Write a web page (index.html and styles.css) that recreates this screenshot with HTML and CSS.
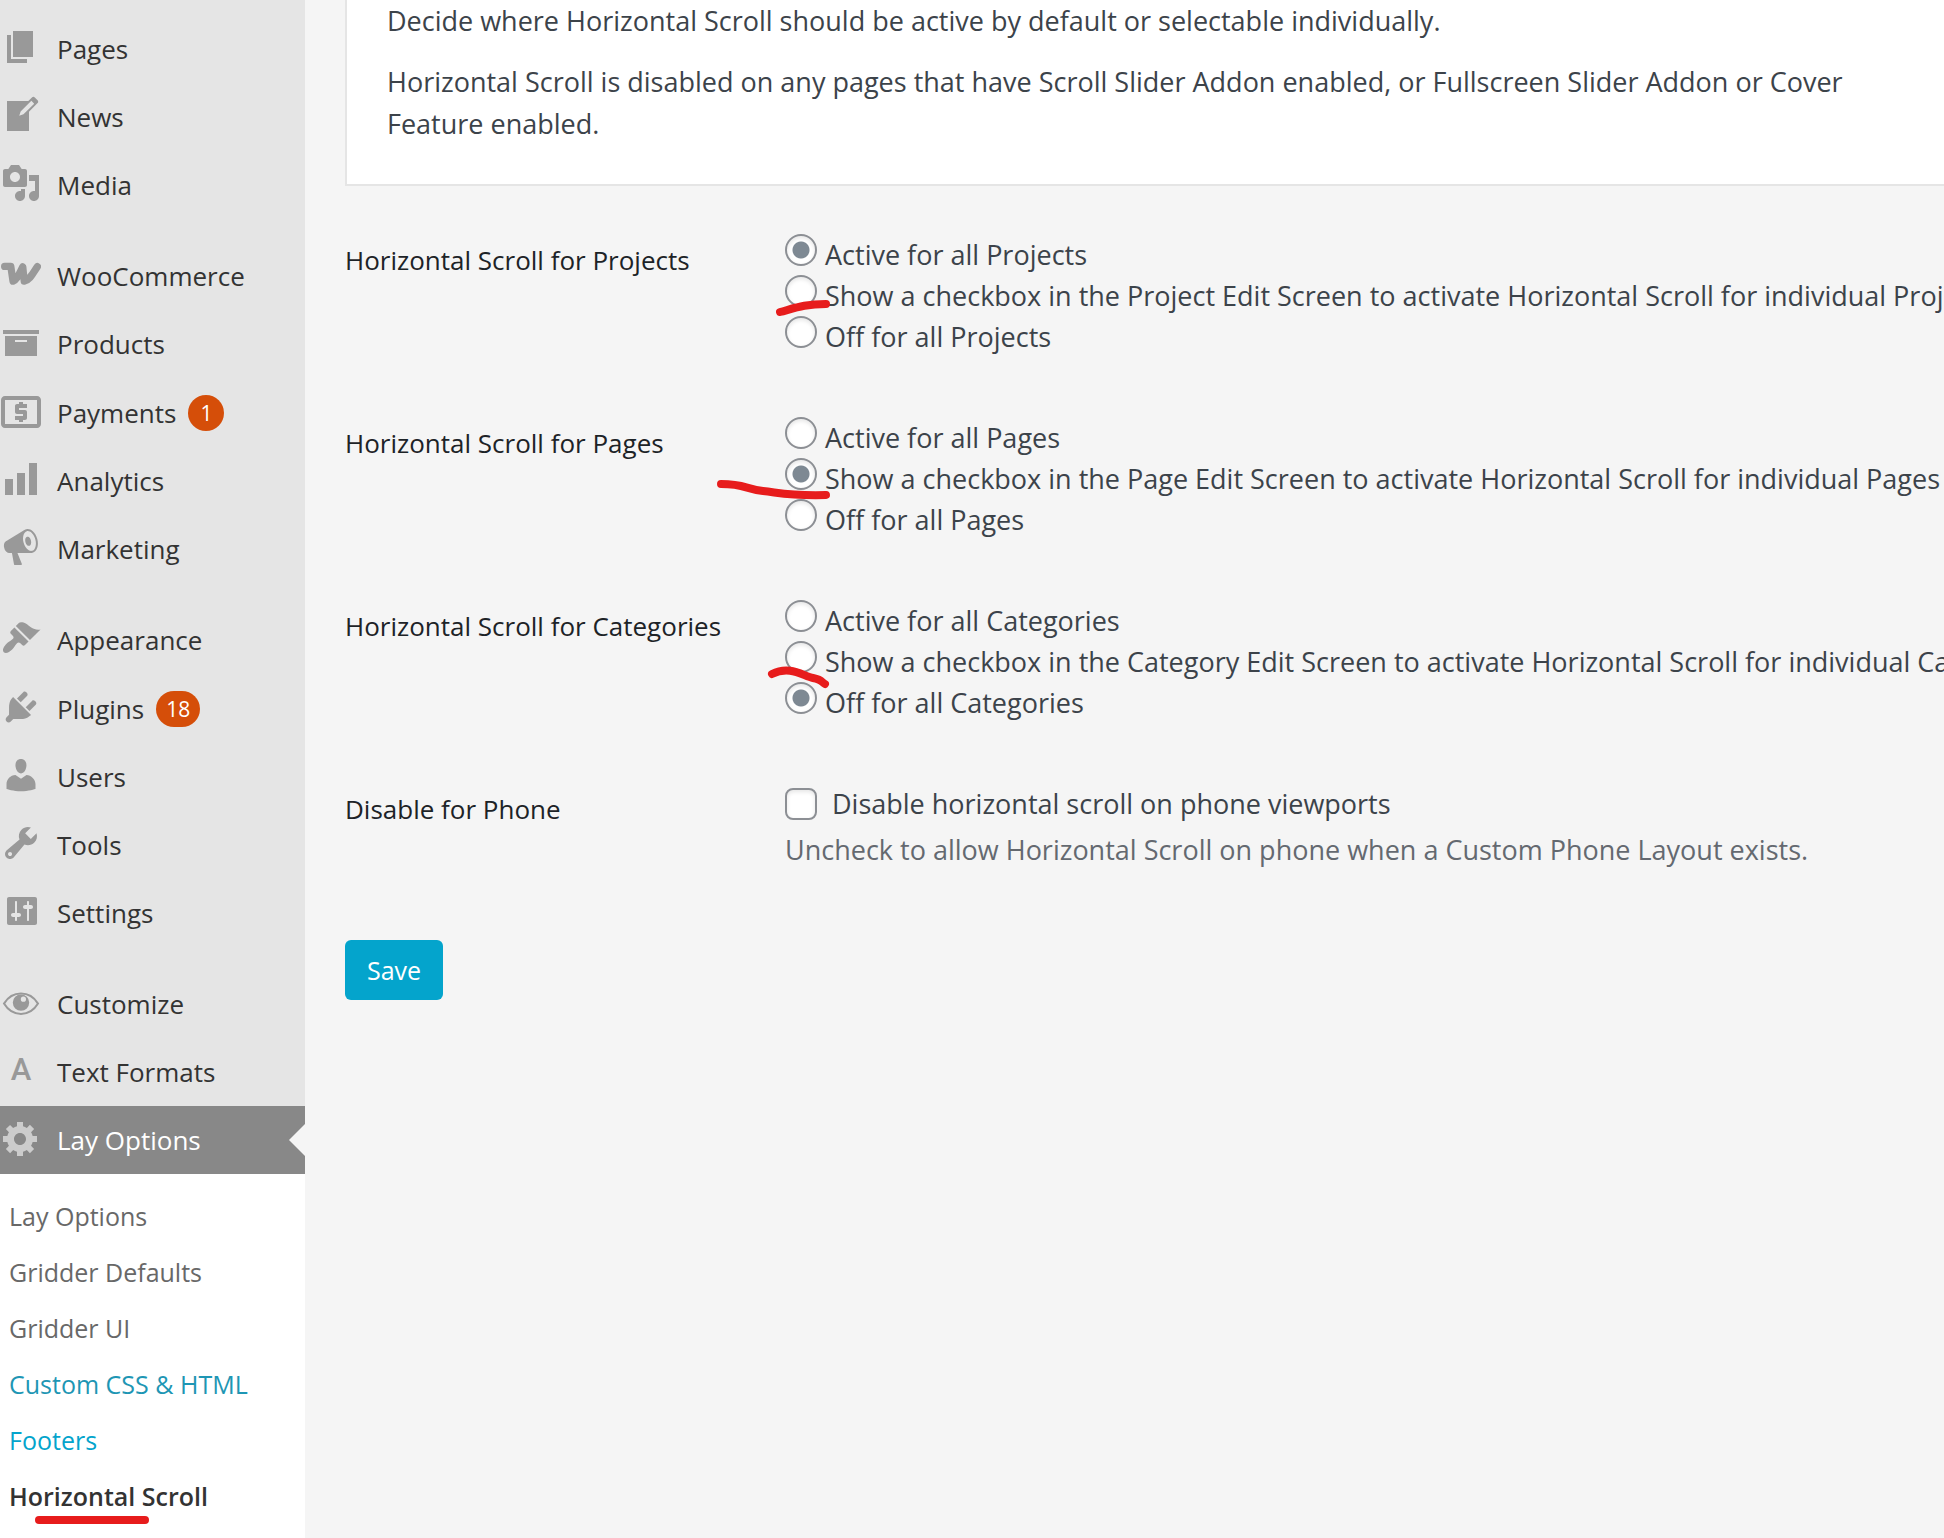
FILE: index.html
```html
<!DOCTYPE html>
<html lang="en">

<head>
    <meta charset="UTF-8">
    <meta name="viewport" content="width=device-width, initial-scale=1.0">
    <title>Horizontal Scroll</title>
    <link rel="stylesheet" href="styles.css">
</head>

<body>
    <div class="wrap">
        <nav class="sidebar">
            <ul class="menu">
                <li><a href="#"><svg class="icon" viewBox="0 0 20 20"><path d="M6 15v-13h10v13h-10zM5 16h8v2h-10v-14h2v12z"/></svg>Pages</a></li>
                <li><a href="#"><svg class="icon" viewBox="0 0 20 20"><path d="M16.89 1.2l1.41 1.41c.39.39.39 1.02 0 1.41L14 8.33V18H3V3h10.67l1.8-1.8c.4-.39 1.03-.4 1.42 0zm-5.66 8.48l5.37-5.36-1.42-1.42-5.36 5.37-.71 2.12z"/></svg>News</a></li>
                <li><a href="#"><svg class="icon" viewBox="0 0 20 20"><path d="M13 11V4c0-.55-.45-1-1-1h-1.67L9 1H5L3.67 3H2c-.55 0-1 .45-1 1v7c0 .55.45 1 1 1h10c.55 0 1-.45 1-1zM7 4.5c1.38 0 2.5 1.12 2.5 2.5S8.38 9.5 7 9.5 4.5 8.38 4.5 7 5.62 4.5 7 4.5zM14 6h5v10.5c0 1.38-1.12 2.5-2.5 2.5S14 17.88 14 16.5s1.12-2.5 2.5-2.5c.17 0 .34.02.5.05V9h-3V6zm-4 8.05V13h2v3.5c0 1.38-1.12 2.5-2.5 2.5S7 17.88 7 16.5 8.12 14 9.5 14c.17 0 .34.02.5.05z"/></svg>Media</a></li>
                <li class="group"><a href="#"><svg class="icon" viewBox="0 0 20 20"><path class="woo" d="M1.8 6.2H4.9L6 13.6C8 13 9.2 9.5 10.9 6.4L11.6 13.6C14.500 13 16 9.500 18.200 6.300"/></svg>WooCommerce</a></li>
                <li><a href="#"><svg class="icon" viewBox="0 0 20 20"><path d="M19 4v2H1V4h18zM2 7h16v10H2V7zm11 3V9H7v1h6z"/></svg>Products</a></li>
                <li class="counted"><a href="#"><svg class="icon" viewBox="2 1.5 20 20"><path d="M11 17h2v-1h1c.55 0 1-.45 1-1v-3c0-.55-.45-1-1-1h-3v-1h4V8h-2V7h-2v1h-1c-.55 0-1 .45-1 1v3c0 .55.45 1 1 1h3v1H9v2h2v1zm9-13H4c-1.11 0-1.99.89-1.99 2L2 18c0 1.11.89 2 2 2h16c1.11 0 2-.89 2-2V6c0-1.11-.89-2-2-2zm0 14H4V6h16v12z"/></svg>Payments <span class="badge">1</span></a></li>
                <li><a href="#"><svg class="icon" viewBox="0 0 20 20"><path d="M18 18V2h-4v16h4zm-6 0V7H8v11h4zm-6 0v-8H2v8h4z"/></svg>Analytics</a></li>
                <li><a href="#"><svg class="icon" viewBox="0 0 20 20"><path d="M18.15 5.94c.46 1.62.38 3.22-.02 4.48-.42 1.28-1.26 2.18-2.3 2.48-.16.06-.26.06-.4.06-.06.02-.12.02-.18.02-.06.02-.14.02-.22.02h-6.8l2.22 5.5c.02.14-.06.26-.14.34-.08.1-.24.16-.34.16H6.95c-.1 0-.26-.06-.34-.16-.08-.08-.16-.2-.14-.34l-1-5.5H4.25l-.02-.02c-.5.06-1.08-.18-1.54-.62s-.88-1.08-1.06-1.88c-.24-.8-.2-1.56-.02-2.2.18-.62.58-1.08 1.06-1.3l.02-.02 9-5.4c.1-.06.18-.1.24-.16.06-.04.14-.08.24-.12.16-.08.28-.12.5-.18 1.04-.3 2.24.1 3.22.98s1.84 2.24 2.26 3.86zm-2.58 5.98h-.02c.4-.1.74-.34 1.04-.7.58-.7.86-1.76.86-3.04 0-.64-.1-1.3-.28-1.98-.34-1.36-1.02-2.5-1.78-3.24s-1.68-1.1-2.46-.88c-.82.22-1.4.96-1.7 2-.32 1.04-.28 2.36.06 3.72.38 1.36 1 2.5 1.8 3.24.78.74 1.62 1.1 2.48.88zm-2.54-7.08c.22-.04.42-.02.62.04.38.16.76.48 1.02 1s.42 1.2.42 1.78c0 .3-.04.56-.12.8-.18.48-.44.84-.86.94-.34.1-.8-.06-1.14-.4s-.64-.86-.78-1.5c-.18-.62-.12-1.24.02-1.72s.48-.84.82-.94z"/></svg>Marketing</a></li>
                <li class="group"><a href="#"><svg class="icon" viewBox="0 0 20 20"><path d="M14.48 11.06L7.41 3.99l1.5-1.5c.5-.56 2.3-.47 3.51.32 1.21.8 1.43 1.28 2.91 2.1 1.18.64 2.45 1.26 4.45.85zm-.71.71L6.7 4.7 4.93 6.47c-.39.39-.39 1.02 0 1.41l1.06 1.06c.39.39.39 1.03 0 1.42-.6.6-1.43 1.11-2.21 1.69-.35.26-.7.53-1.01.84C1.43 14.23.4 16.08 1.4 17.07c.99 1 2.84-.03 4.18-1.36.31-.31.58-.66.85-1.02.57-.78 1.08-1.61 1.69-2.21.39-.39 1.02-.39 1.41 0l1.06 1.06c.39.39 1.02.39 1.41 0z"/></svg>Appearance</a></li>
                <li class="counted"><a href="#"><svg class="icon" viewBox="0 0 20 20"><path d="M13.11 4.36L9.87 7.6 8 5.73l3.24-3.24c.35-.34 1.05-.2 1.56.32.52.51.66 1.21.31 1.55zm-8 1.77l.91-1.12 9.01 9.01-1.19.84c-.71.71-2.63 1.16-3.82 1.16H6.14L4.9 17.26c-.59.59-1.54.59-2.12 0-.59-.58-.59-1.53 0-2.12l1.24-1.24v-3.88c0-1.13.4-3.19 1.09-3.89zm7.26 3.97l3.24-3.24c.34-.35 1.04-.21 1.55.31.52.51.66 1.21.31 1.55l-3.24 3.25z"/></svg>Plugins <span class="badge">18</span></a></li>
                <li><a href="#"><svg class="icon" viewBox="0 0 20 20"><path d="M10 9.25c-2.27 0-2.73-3.44-2.73-3.44C7 4.02 7.82 2 9.97 2c2.16 0 2.98 2.02 2.71 3.81 0 0-.41 3.44-2.68 3.44zm0 2.57L12.72 10c2.39 0 4.52 2.33 4.52 4.53v2.49s-3.65 1.13-7.24 1.13c-3.65 0-7.24-1.13-7.24-1.13v-2.49c0-2.25 1.94-4.48 4.47-4.48z"/></svg>Users</a></li>
                <li><a href="#"><svg class="icon" viewBox="0 0 20 20"><path d="M16.68 9.77c-1.34 1.34-3.3 1.67-4.95.99l-5.41 6.52c-.99.99-2.59.99-3.58 0s-.99-2.59 0-3.57l6.52-5.42c-.68-1.65-.35-3.61.99-4.95 1.28-1.28 3.12-1.62 4.72-1.06l-2.89 2.89 2.82 2.82 2.86-2.87c.53 1.58.18 3.39-1.08 4.65zM3.81 16.21c.4.39 1.04.39 1.43 0 .4-.4.4-1.04 0-1.43-.39-.4-1.03-.4-1.43 0-.39.39-.39 1.03 0 1.43z"/></svg>Tools</a></li>
                <li><a href="#"><svg class="icon" viewBox="0 0 20 20"><path d="M18 16V4c0-.55-.45-1-1-1H4c-.55 0-1 .45-1 1v12c0 .55.45 1 1 1h13c.55 0 1-.45 1-1zM8 11h1c.55 0 1 .45 1 1s-.45 1-1 1H8v1.5c0 .28-.22.5-.5.5s-.5-.22-.5-.5V13H6c-.55 0-1-.45-1-1s.45-1 1-1h1V5.5c0-.28.22-.5.5-.5s.5.22.5.5V11zm5-2h-1c-.55 0-1-.45-1-1s.45-1 1-1h1V5.5c0-.28.22-.5.5-.5s.5.22.5.5V7h1c.55 0 1 .45 1 1s-.45 1-1 1h-1v5.5c0 .28-.22.5-.5.5s-.5-.22-.5-.5V9z"/></svg>Settings</a></li>
                <li class="group"><a href="#"><svg class="icon" viewBox="0 0 20 20"><path class="eye" d="M1.5 10.800C3.500 7.600 6.500 5.800 10 5.800s6.500 1.800 8.500 5c-2 3.300-5 5.200-8.500 5.200s-6.500-1.900-8.500-5.200z"/><path fill-rule="evenodd" d="M10 6.200a4.100 4.100 0 0 1 0 8.200a4.100 4.100 0 0 1 0-8.200zM11.200 7.300a1.300 1.300 0 0 0 0 2.600a1.300 1.300 0 0 0 0-2.600z"/></svg>Customize</a></li>
                <li><a href="#"><span class="icon letter">A</span>Text Formats</a></li>
                <li class="current"><a href="#"><svg class="icon" viewBox="0 0 20 20"><path d="M18 12h-2.18c-.17.7-.44 1.35-.81 1.93l1.54 1.54-2.1 2.1-1.54-1.54c-.58.36-1.23.63-1.91.79V19H8v-2.18c-.68-.16-1.33-.43-1.91-.79l-1.54 1.54-2.12-2.12 1.54-1.54c-.36-.58-.63-1.23-.79-1.91H1V9.03h2.17c.16-.7.44-1.35.8-1.94L2.43 5.55l2.1-2.1 1.54 1.54c.58-.37 1.24-.64 1.93-.81V2h3v2.18c.68.16 1.33.43 1.91.79l1.54-1.54 2.12 2.12-1.54 1.54c.36.59.64 1.24.8 1.94H18V12zm-8.5 1.5c1.66 0 3-1.34 3-3s-1.34-3-3-3-3 1.34-3 3 1.34 3 3 3z"/></svg>Lay Options</a></li>
            </ul>
            <ul class="submenu">
                <li><a href="#">Lay Options</a></li>
                <li><a href="#">Gridder Defaults</a></li>
                <li><a href="#">Gridder UI</a></li>
                <li><a class="hover" href="#">Custom CSS &amp; HTML</a></li>
                <li><a class="link" href="#">Footers</a></li>
                <li>
                    <a class="active" href="#">Horizontal Scroll</a>
                    <svg class="underline" viewBox="0 0 114 8"><path d="M4 4H110"/></svg>
                </li>
            </ul>
        </nav>

        <main class="content">
            <div class="panel">
                <p>Decide where Horizontal Scroll should be active by default or selectable individually.</p>
                <p>Horizontal Scroll is disabled on any pages that have Scroll Slider Addon enabled, or Fullscreen Slider Addon or Cover Feature enabled.</p>
            </div>

            <form>
                <div class="row" role="radiogroup" aria-labelledby="projects">
                    <div class="title" id="projects">Horizontal Scroll for Projects</div>
                    <div class="options">
                        <label class="option"><input type="radio" name="projects" checked>Active for all Projects</label>
                        <label class="option"><input type="radio" name="projects">Show a checkbox in the Project Edit Screen to activate Horizontal Scroll for individual Projects
                            <svg class="mark" viewBox="-80 0 140 60"><path d="M-5 37C10 33 20 29 41 29"/></svg>
                        </label>
                        <label class="option"><input type="radio" name="projects">Off for all Projects</label>
                    </div>
                </div>

                <div class="row" role="radiogroup" aria-labelledby="pages">
                    <div class="title" id="pages">Horizontal Scroll for Pages</div>
                    <div class="options">
                        <label class="option"><input type="radio" name="pages">Active for all Pages</label>
                        <label class="option"><input type="radio" name="pages" checked>Show a checkbox in the Page Edit Screen to activate Horizontal Scroll for individual Pages
                            <svg class="mark" viewBox="-80 0 140 60"><path d="M-64 26C-40 26 -40 31 -22 33S5 38 41 37"/></svg>
                        </label>
                        <label class="option"><input type="radio" name="pages">Off for all Pages</label>
                    </div>
                </div>

                <div class="row" role="radiogroup" aria-labelledby="categories">
                    <div class="title" id="categories">Horizontal Scroll for Categories</div>
                    <div class="options">
                        <label class="option"><input type="radio" name="categories">Active for all Categories</label>
                        <label class="option"><input type="radio" name="categories">Show a checkbox in the Category Edit Screen to activate Horizontal Scroll for individual Categories
                            <svg class="mark" viewBox="-80 0 140 60"><path d="M-13 33C5 24 18 35 28 37S36 41 40 43"/></svg>
                        </label>
                        <label class="option"><input type="radio" name="categories" checked>Off for all Categories</label>
                    </div>
                </div>

                <div class="row">
                    <div class="title">Disable for Phone</div>
                    <div class="options">
                        <label class="option check"><input type="checkbox" name="phone">Disable horizontal scroll on phone viewports</label>
                        <p class="description">Uncheck to allow Horizontal Scroll on phone when a Custom Phone Layout exists.</p>
                    </div>
                </div>

                <button class="save" type="submit">Save</button>
            </form>
        </main>
    </div>
</body>

</html>
```

FILE: styles.css
```css
* {
    box-sizing: border-box;
    margin: 0;
    padding: 0;
}

body {
    background-color: #f5f5f5;
    color: #3c434a;
    font-family: "Segoe UI", "Open Sans", sans-serif;
    font-size: 27px;
    line-height: 42px;
}

ul {
    list-style: none;
}

a {
    color: inherit;
    text-decoration: none;
}

.wrap {
    display: flex;
    min-height: 100vh;
}

/* left menu */
.sidebar {
    display: flex;
    flex-direction: column;
    flex: none;
    width: 305px;
    background-color: #e5e5e5;
}

.menu {
    padding-top: 15px;
    color: #333;
    font-size: 26px;
}

.menu a {
    display: flex;
    align-items: center;
    gap: 16px;
    padding-left: 1px;
    line-height: 68px;
}

.menu .group {
    margin-top: 23px;
}

.menu .counted {
    padding-top: 1px;
}

.icon {
    flex: none;
    width: 40px;
    height: 40px;
    margin-bottom: 4px;
    fill: #999;
}

.icon .woo {
    fill: none;
    stroke: #999;
    stroke-width: 3.6;
    stroke-linecap: round;
    stroke-linejoin: round;
}

.icon .eye {
    fill: none;
    stroke: #999;
}

.letter {
    color: #999;
    font-family: Roboto, sans-serif;
    font-size: 31px;
    font-weight: 500;
    line-height: 40px;
    text-align: center;
}

.badge {
    min-width: 36px;
    height: 36px;
    margin-left: -4px;
    padding: 0 10px;
    border-radius: 18px;
    background-color: #d54e09;
    color: white;
    font-size: 21px;
    line-height: 36px;
    text-align: center;
}

.menu .current {
    position: relative;
    background-color: #888;
    color: white;
}

.current .icon {
    fill: #ccc;
}

/* arrow that points at the open page */
.current::after {
    content: "";
    position: absolute;
    top: 18px;
    right: 0;
    border: 16px solid transparent;
    border-left: none;
    border-right-color: #f5f5f5;
}

.submenu {
    flex: 1;
    padding: 14px 0 14px 9px;
    background-color: white;
    color: #686868;
    font-size: 25px;
    line-height: 56px;
}

.submenu li {
    position: relative;
}

.submenu .hover {
    color: #1e96b4;
}

.submenu .link {
    color: #04a4cc;
}

.submenu .active {
    color: #333;
    font-weight: 600;
}

.underline {
    position: absolute;
    left: 26px;
    bottom: 0;
    width: 114px;
    height: 8px;
}

.underline path,
.mark path {
    fill: none;
    stroke: #e71c1c;
    stroke-width: 8;
    stroke-linecap: round;
}

/* settings page */
.content {
    flex: 1;
    min-width: 0;
    padding-left: 40px;
    overflow: hidden;
}

.panel {
    display: grid;
    gap: 19px;
    margin-right: -40px;
    padding: 0 100px 39px 40px;
    border: 2px solid #e5e5e5;
    border-top: none;
    background-color: white;
}

form {
    display: grid;
    gap: 60px;
    padding-top: 48px;
}

.row {
    display: grid;
    grid-template-columns: 440px 1fr;
}

.title {
    padding-top: 5px;
    color: #1d2327;
    font-size: 26px;
}

.option {
    position: relative;
    display: flex;
    gap: 8px;
    line-height: 41px;
    white-space: nowrap;
}

.option input {
    appearance: none;
    flex: none;
    width: 32px;
    height: 32px;
    border: 2px solid #8c8f94;
    border-radius: 50%;
    background-color: white;
    box-shadow: inset 0 2px 4px rgba(0, 0, 0, 0.1);
}

.option input[type="radio"]:checked {
    background-image: radial-gradient(circle, #7e8993 8px, transparent 9px);
}

.check {
    align-items: center;
    gap: 15px;
}

.option input[type="checkbox"] {
    border-radius: 8px;
}

.mark {
    position: absolute;
    top: 0;
    left: -80px;
    width: 140px;
    height: 60px;
}

.description {
    margin-top: 5px;
    color: #646970;
}

.save {
    justify-self: start;
    margin-top: 9px;
    padding: 0 22px;
    border: none;
    border-radius: 6px;
    background-color: #04a4cc;
    color: white;
    font-family: inherit;
    font-size: 25px;
    line-height: 60px;
    cursor: pointer;
}
```
